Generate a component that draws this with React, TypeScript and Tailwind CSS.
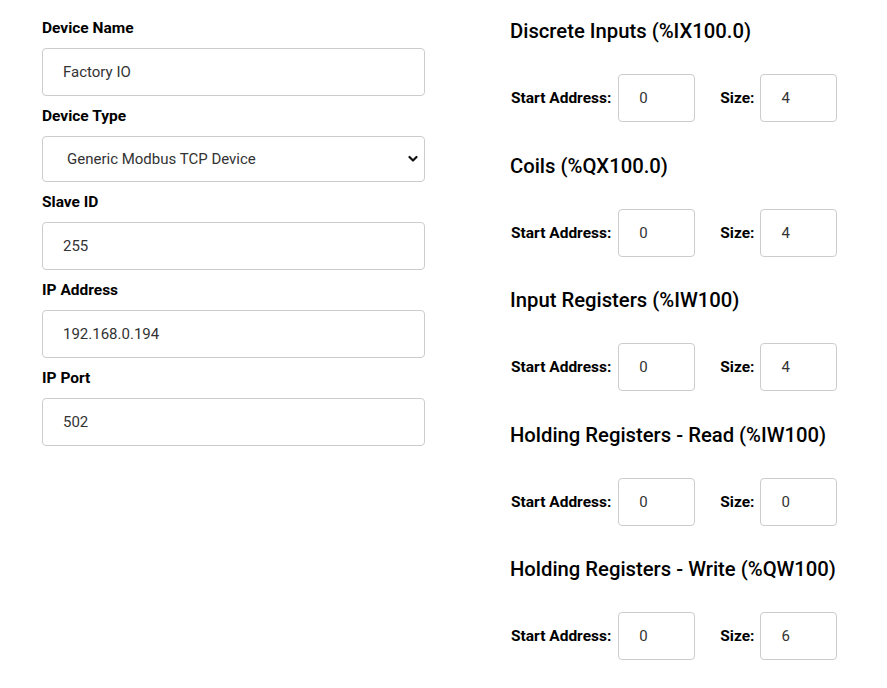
import React from 'react';

const fields = [
  { label: 'Device Name', value: 'Factory IO' },
  { label: 'Slave ID', value: '255' },
  { label: 'IP Address', value: '192.168.0.194' },
  { label: 'IP Port', value: '502' },
];

const areas = [
  { title: 'Discrete Inputs (%IX100.0)', start: '0', size: '4' },
  { title: 'Coils (%QX100.0)', start: '0', size: '4' },
  { title: 'Input Registers (%IW100)', start: '0', size: '4' },
  { title: 'Holding Registers - Read (%IW100)', start: '0', size: '0' },
  { title: 'Holding Registers - Write (%QW100)', start: '0', size: '6' },
];

const Label: React.FC<{ text: string }> = ({ text }) => (
  <label className="block h-5 leading-5 text-[15.5px] font-bold text-black mb-[10px]">{text}</label>
);

const TextField: React.FC<{ value: string }> = ({ value }) => (
  <input
    type="text"
    defaultValue={value}
    className="block w-full h-12 px-5 rounded border border-[#cccccc] bg-white text-[15px] text-[#333333] outline-none"
  />
);

export default function App() {
  const [first, ...rest] = fields;

  return (
    <div className="min-h-screen bg-white font-['Roboto',sans-serif] flex">
      {/* Device settings */}
      <div className="w-[383px] ml-[42px] pt-[18px]">
        <Label text={first.label} />
        <TextField value={first.value} />

        <div className="mt-[10px]">
          <Label text="Device Type" />
          <div className="relative">
            <select
              defaultValue="generic"
              className="block w-full h-[46px] pl-6 pr-10 appearance-none rounded border border-[#cccccc] bg-white text-[15px] text-[#333333] outline-none"
            >
              <option value="generic">Generic Modbus TCP Device</option>
              <option value="esp32">ESP32</option>
              <option value="esp8266">ESP8266</option>
            </select>
            <svg
              className="absolute right-[7px] top-[19px] w-[10px] h-[8px] pointer-events-none"
              viewBox="0 0 10 8"
              fill="none"
            >
              <path d="M1.5 2 L5 5.5 L8.5 2" stroke="#111111" strokeWidth="2.2" strokeLinecap="round" strokeLinejoin="round" />
            </svg>
          </div>
        </div>

        {rest.map((f) => (
          <div key={f.label} className="mt-[10px]">
            <Label text={f.label} />
            <TextField value={f.value} />
          </div>
        ))}
      </div>

      {/* Address areas */}
      <div className="ml-[85px] pt-[19px] flex flex-col gap-[31.5px]">
        {areas.map((a) => (
          <div key={a.title}>
            <h3 className="h-6 leading-6 text-[20.25px] font-medium text-black mb-[31px]">{a.title}</h3>
            <div className="flex items-center">
              <span className="pt-[2px] text-[15.5px] font-bold text-black ml-px">Start Address:</span>
              <input
                type="text"
                defaultValue={a.start}
                className="ml-[7px] w-[77px] h-12 pl-5 rounded border border-[#cccccc] bg-white text-[15px] text-[#333333] outline-none"
              />
              <span className="pt-[2px] ml-[25px] text-[15.5px] font-bold text-black">Size:</span>
              <input
                type="text"
                defaultValue={a.size}
                className="ml-[6px] w-[77px] h-12 pl-5 rounded border border-[#cccccc] bg-white text-[15px] text-[#333333] outline-none"
              />
            </div>
          </div>
        ))}
      </div>
    </div>
  );
}
